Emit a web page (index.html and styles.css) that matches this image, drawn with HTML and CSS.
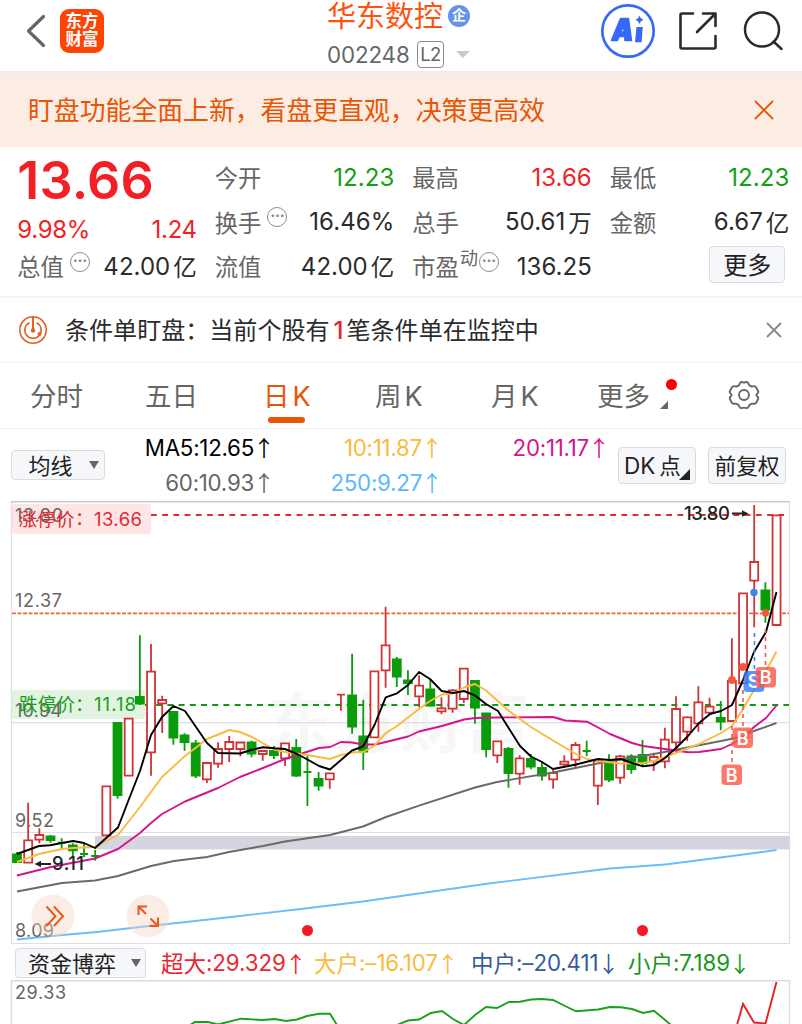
FILE: index.html
```html
<!DOCTYPE html>
<html lang="zh-CN">
<head>
<meta charset="utf-8">
<title>华东数控 002248</title>
<link rel="stylesheet" href="styles.css">
</head>
<body>
<div class="app">
  <header class="topbar">
    <div class="left">
      <svg class="back" width="20" height="34" viewBox="0 0 20 34"><path d="M17.500 2.500 2.500 17 17.500 31.500" fill="none" stroke="#666" stroke-width="3.200" stroke-linecap="round" stroke-linejoin="round"/></svg>
      <div class="logo"><span>东方</span><span>财富</span></div>
    </div>
    <div class="title">
      <div class="name"><span>华东数控</span><span class="corp">企</span></div>
      <div class="code"><span class="num">002248</span><span class="l2">L2</span><i class="caret"></i></div>
    </div>
    <div class="actions">
      <svg class="ai" width="56" height="56" viewBox="0 0 56 56"><circle cx="28" cy="28" r="25.700" fill="none" stroke="#3769f8" stroke-width="2.700"/><path fill="#3769f8" fill-rule="evenodd" stroke="#3769f8" stroke-width="1.500" stroke-linejoin="round" d="M20.500 15.500h8l3 22h-6.500l-.4-4h-5.500l-1.700 4h-6zM23.200 22.500l-2.200 6.500h3.300z"/><path fill="#3769f8" d="M36.500 24h6.300l-1.200 15.200h-6.600zM39.500 12.500q1 3.500 4.300 4.300-3.300 1-4.300 4.300-1-3.300-4.300-4.300 3.300-.8 4.300-4.300z"/></svg>
      <svg width="40" height="40" viewBox="0 0 40 40"><g fill="none" stroke="#2b2b2b" stroke-width="2.600" stroke-linecap="round" stroke-linejoin="round"><path d="M15 2.500H4Q2.500 2.500 2.500 4V36Q2.500 37.500 4 37.500H36Q37.500 37.500 37.500 36V25"/><path d="M25 2.500H37.500V15M37 3 19 21"/></g></svg>
      <svg width="40" height="40" viewBox="0 0 40 40"><g fill="none" stroke="#2b2b2b" stroke-width="2.500" stroke-linecap="round"><circle cx="19" cy="18.500" r="17"/><path d="m30.500 30.500 8 7.500"/></g></svg>
    </div>
  </header>

  <section class="banner">
    <span>盯盘功能全面上新，看盘更直观，决策更高效</span>
    <svg width="20" height="20" viewBox="0 0 20 20"><path d="m1.500 1.500 17 17m0-17-17 17" stroke="#ea5504" stroke-width="1.800" stroke-linecap="round"/></svg>
  </section>

  <section class="quote">
    <div class="col">
      <div class="price up">13.66</div>
      <div class="row pct up"><span>9.98%</span><span>1.24</span></div>
      <div class="row"><label>总值<i class="dots">···</i></label><b>42.00<em>亿</em></b></div>
    </div>
    <div class="col">
      <div class="row"><label>今开</label><b class="down">12.23</b></div>
      <div class="row"><label>换手<i class="dots">···</i></label><b>16.46%</b></div>
      <div class="row"><label>流值</label><b>42.00<em>亿</em></b></div>
    </div>
    <div class="col">
      <div class="row"><label>最高</label><b class="up">13.66</b></div>
      <div class="row"><label>总手</label><b>50.61<em>万</em></b></div>
      <div class="row"><label>市盈<sup>动</sup><i class="dots tight">···</i></label><b>136.25</b></div>
    </div>
    <div class="col">
      <div class="row"><label>最低</label><b class="down">12.23</b></div>
      <div class="row"><label>金额</label><b>6.67<em>亿</em></b></div>
      <div class="row end"><span class="btn more"><span>更多</span></span></div>
    </div>
  </section>

  <section class="alert">
    <svg width="30" height="30" viewBox="0 0 30 30"><g fill="none" stroke="#dd6428" stroke-width="1.600"><circle cx="15" cy="15" r="13.200"/><path d="M11.500 7.700a8.200 8.200 0 1 0 7 0"/><path d="M15 2v13" stroke-width="2"/></g><circle cx="15" cy="15.500" r="2.200" fill="#dd6428"/><circle cx="21.500" cy="19" r="2" fill="#dd6428"/></svg>
    <p>条件单盯盘：当前个股有<strong>1</strong>笔条件单在监控中</p>
    <svg width="16" height="16" viewBox="0 0 16 16"><path d="m1.500 1.500 13 13m0-13-13 13" stroke="#888" stroke-width="1.800" stroke-linecap="round"/></svg>
  </section>

  <nav class="tabs">
    <span>分时</span><span>五日</span><span class="on">日<k>K</k></span><span>周<k>K</k></span><span>月<k>K</k></span>
    <span class="moretab">更多<i class="dot"></i><i class="corner"></i></span>
    <svg width="32" height="30" viewBox="0 0 32 30"><g fill="none" stroke="#666" stroke-width="1.900" stroke-linejoin="round"><path d="M12 3.200Q12.600 1.500 14.300 2.100 16 3 17.700 2.100 19.400 1.500 20.300 3.200C21.300 6 23 7 25.700 6.200Q27.500 5.800 28.300 7.600L30 11Q30.800 12.600 29.300 13.600 27.700 15 29.300 16.600 30.800 17.700 30 19.300L28.300 22.500Q27.400 24.200 25.600 23.700C23 23.200 21.500 24.400 20.400 26.800Q19.500 28.600 17.700 28 16 27.200 14.300 28 12.500 28.600 11.600 26.800C10.500 24.400 9 23.200 6.400 23.700Q4.600 24.200 3.700 22.500L2 19.300Q1.200 17.700 2.700 16.600 4.300 15 2.700 13.600 1.200 12.600 2 11L3.700 7.600Q4.500 5.800 6.300 6.200C9 7 11 6 12 3.200Z"/><circle cx="16" cy="15" r="5"/></g></svg>
  </nav>

  <section class="ma">
    <span class="btn select"><span>均线</span><i class="tri"></i></span>
    <div class="mavals">
      <span class="c5">MA5:12.65<i class="ar">↑</i></span><span class="c10">10:11.87<i class="ar">↑</i></span><span class="c20">20:11.17<i class="ar">↑</i></span>
      <span class="c60">60:10.93<i class="ar">↑</i></span><span class="c250">250:9.27<i class="ar">↑</i></span>
    </div>
    <span class="btn dk"><span><span class="num">DK</span>点</span><i class="fold"></i></span>
    <span class="btn fq"><span>前复权</span></span>
  </section>

  <svg id="kline" class="chart" width="802" height="443" viewBox="0 501 802 443">
    <text class="wm" x="268" y="747" textLength="262">东方财富</text>
    <g fill="none" stroke="#dedee4" stroke-width="1.200"><path d="M11.500 944V502M789.500 502V944M11 943.500H790"/><path d="M12 722.700H789M12 832.500H789"/><path d="M11 501.800H790" stroke="#c9c9cc" stroke-width="1.600"/></g>
    <rect x="95" y="836" width="694.500" height="13.500" fill="#d5d5df"/>
    <rect x="12" y="504" width="139" height="30" rx="3" fill="#fb8080" fill-opacity=".2"/>
    <rect x="12" y="690" width="133" height="29" rx="3" fill="#53b553" fill-opacity=".17"/>
    <path d="M12 613.300H789" stroke="#ec6a35" stroke-width="1.700" stroke-dasharray="4 1.500"/>
    <path d="M151 515H789" stroke="#e22b32" stroke-width="2" stroke-dasharray="5.800 5.400"/>
    <path d="M145 705H789" stroke="#12990f" stroke-width="2" stroke-dasharray="6 5.200"/>
    <g id="candles"></g>
    <g fill="none" stroke-width="1.900" stroke-linejoin="round">
      <polyline stroke="#6bbdf8" points="17,939.500 62,935 97,932 140,927 195,921 240,916 307,908.300 363,901.500 401,896 485,884 610,868.500 665,864.500 732,856 776.500,850"/>
      <polyline stroke="#6a6a6a" points="17,891.500 62,883 95,880.500 118,876 151,866 174,861 190,859 207,857 229,852 263,846 285,841.500 330,835 363,826.500 386,817 419,805.700 475,787.500 497,782 553,772.500 600,763 654,754 721,741 743,736.500 754,731 776.500,723"/>
      <polyline stroke="#d4158a" points="17,875.500 51,867 95,858.500 118,849 140,833 151,823 162,814 185,801.500 218,788 240,777 263,768 285,759 319,748 330,747 341,742 352,742.500 363,744.500 375,744.500 386,742 408,736.500 419,731.500 442,726 464,719.500 475,718 497,717.500 553,717 565,720.500 587,721.700 599,728 610,734 632,743 643,746 665,749 688,752.300 699,752 721,749 732,744 743,738 754,727 766,718 776.500,705.500"/>
      <polyline stroke="#f9bb3d" points="17,862 39,854 62,849 73,848 95,847 118,835 140,807 162,777 185,756 207,739 229.500,730 240,732 252,737 274,749.500 285,752 307,755 330,759 341,755 352,752.500 363,752 374,746 386,733 397,726 419,709 430,701 442,694.500 453,693.500 464,687.500 475,684 486,690.500 509,711 531,727 553,740.500 576,754 587,759 598,761 621,763.500 643,763 654,761 665,757 677,752.500 699,744 721,733 732,726 743,709 754,690 766,671 776.500,651.500"/>
      <polyline stroke="#000" points="17,854 39,846 50,845.300 62,843 73,841 84,843 95,848 118,827.500 129,799 140,771 151,735 162,717 173.500,706 185,711 196,727 207,743 218,753 240,753.500 251,750 263,747.300 274,748.300 285,749 297,754 307.500,759.500 319,766 330,769.500 352,750.500 363,746.500 374.500,725 385.700,697.300 397,693.300 408,685 419,672 430,679 441.700,691 453,693 464,691 475,695.500 486,704 498,711 508,727 520,746 531,756.500 542,762 553,769 576,764.500 598,759 610,760 621,759 632,763 643,766.300 654,765 665,758 677,747 688,736 699,723 710,714 721,711 732,705 743,680 754,652 766,632 776.500,592"/>
    </g>
    <g class="axis"><text x="15" y="521.500" textLength="48">13.80</text><text x="15" y="606.500" textLength="47">12.37</text><text x="15" y="717" textLength="47">10.94</text><text x="15" y="826.500" textLength="39">9.52</text><text x="15" y="937" textLength="39">8.09</text></g>
    <g class="limit"><text x="18.500" y="525.500" fill="#e02a34" textLength="56">涨停价</text><text x="75" y="525" fill="#e02a34">：</text><text x="94" y="525.500" fill="#e02a34" textLength="48">13.66</text>
    <text x="19" y="711" fill="#14a014" textLength="56">跌停价</text><text x="75" y="710.500" fill="#14a014">：</text><text x="94" y="711" fill="#14a014" textLength="42">11.18</text></g>
    <g class="mark"><text x="684" y="520" textLength="46">13.80</text><text x="52" y="870" textLength="32">9.11</text></g>
    <g fill="none" stroke="#222" stroke-width="1.800"><path d="M732 513.500H746M51 864H38"/></g><path d="m748.500 513.500-6.500-3.300v6.600zM34.500 864l6.500-3.300v6.600z" fill="#222"/>
    <g fill="none" stroke-width="1.600" stroke-dasharray="4 4"><path d="M754.500 633V672" stroke="#3c85f2"/><path d="M765.500 629V667M743 690V728M732 726V765" stroke="#ef5a50"/></g>
    <circle cx="754" cy="592.500" r="3.700" fill="#3c85f2"/><circle cx="765.500" cy="613" r="3.700" fill="#f05a3a"/><circle cx="743" cy="667" r="3.900" fill="#fa5540"/><circle cx="732" cy="680" r="3.900" fill="#fa5540"/>
    <g class="tag"><rect x="743.500" y="671" width="21" height="21" rx="4" fill="#2f7eff" fill-opacity=".82"/><text x="753.500" y="688">S</text>
    <rect x="755.500" y="667" width="20.500" height="20.500" rx="4" fill="#fb5545" fill-opacity=".8"/><text x="765.800" y="684">B</text>
    <rect x="732.500" y="727.500" width="20.500" height="20.500" rx="4" fill="#fb5545" fill-opacity=".8"/><text x="742.800" y="744.500">B</text>
    <rect x="721.500" y="764.500" width="20.500" height="20.500" rx="4" fill="#fb5545" fill-opacity=".8"/><text x="731.800" y="781.500">B</text></g>
    <g fill="#f6d5c2" fill-opacity=".42"><circle cx="53" cy="916" r="21.500"/><circle cx="148" cy="916" r="21.500"/></g>
    <g fill="none" stroke="#ea5a14" stroke-width="2"><path d="m46.500 906.500 9 9.800-9 9.700M54 906.500l9 9.800-9 9.700"/><path d="M147 906.500h-8.500v8.500M138.500 906.500l7.500 7.500M149.500 926h8.500v-8.500M158 926l-7.500-7.500"/></g>
    <circle cx="307.500" cy="930.500" r="5.500" fill="#f21b22"/><circle cx="642.500" cy="930.500" r="5.500" fill="#f21b22"/>
  </svg>

  <section class="fund">
    <span class="btn select wide"><span>资金博弈</span><i class="tri"></i></span>
    <span class="f1">超大<n>:29.329</n><i class="ar">↑</i></span><span class="f2">大户<n>:–16.107</n><i class="ar">↑</i></span><span class="f3">中户<n>:–20.411</n><i class="ar">↓</i></span><span class="f4">小户<n>:7.189</n><i class="ar">↓</i></span>
  </section>

  <svg class="chart" width="802" height="44" viewBox="0 980 802 44">
    <path d="M11.500 1024V980.800H789.500V1024" fill="none" stroke="#dcdcde" stroke-width="1.400"/>
    <g class="axis"><text x="15" y="998.500" textLength="51">29.33</text></g>
    <g fill="none" stroke-width="1.900"><polyline stroke="#1ba01b" points="190,1025 195,1022 208,1022 218,1024.500 241,1018.700 262,1020 275,1019 286,1021 297,1019.500 307,1016 319,1013.700 330,1013.700 337,1025"/><polyline stroke="#1ba01b" points="397,1025 408,1020.500 419,1019.500 431,1013 442,1011 453,1019 464,1025 475,1015 486,1007 497,1008 509,1002 520,1001.700 531,999.500 542,999 553,1000 565,1006 576,1011.300 598,1009.500 610,1007 621,1007.300 632,1009 643,1013 654,1010.700 671,1025"/><polyline stroke="#e32228" points="737,1025 743,1004 754,1022.500 765.500,1023.500 776.500,982"/></g>
  </svg>
</div>
<script src="chart.js"></script>
</body>
</html>
```
FILE: styles.css
```css
* { box-sizing: border-box; }
body { margin: 0; background: #fff; color: #2b2b2b; font-family: Inter, "Noto Sans CJK SC", sans-serif; overflow: hidden; }
i, em { font-style: normal; }
.app { width: 802px; height: 1024px; overflow: hidden; display: flex; flex-direction: column; }
.app > * { flex: none; }
.up { color: #f21f25 !important; }
.down { color: #12a012 !important; }

.topbar { height: 73px; border-bottom: 2px solid #ececec; display: grid; grid-template-columns: 300px 1fr 300px; }
.left { display: flex; align-items: center; padding: 0 0 9px 26px; gap: 14px; }
.logo { width: 44px; height: 44px; border-radius: 9px; background: #ff4305; color: #fff; display: flex; flex-direction: column; justify-content: center; align-items: center; font-weight: 700; font-size: 16.500px; line-height: 18px; padding-bottom: 2px; }
.title { padding-left: 27px; }
.name { display: flex; align-items: center; height: 31px; font-size: 29px; color: #ff520f; gap: 5px; white-space: nowrap; }
.name > :first-child { margin-top: -3px; }
.corp { width: 22px; height: 22px; border-radius: 50%; background: #6593ec; color: #fff; font-size: 14px; font-weight: 700; line-height: 20px; text-align: center; }
.code { display: flex; align-items: center; height: 28px; margin-top: 9px; font-size: 22.300px; color: #666; }
.code .num { width: 90px; letter-spacing: -.1px; }
.l2 { width: 27px; height: 27px; border: 1.500px solid #888; border-radius: 4px; font-size: 18.500px; line-height: 24px; text-align: center; letter-spacing: -.5px; }
.caret { margin-left: 12px; border: 7px solid transparent; border-top: 7px solid #c9c9c9; border-bottom: 0; }
.actions { display: flex; align-items: center; justify-content: flex-end; gap: 25px; padding: 0 19px 9px 0; }
.ai { margin-right: -3px; }

.banner { height: 74px; background: #fbede4; display: flex; align-items: center; justify-content: space-between; padding: 0 28px; color: #ea5504; font-size: 25.850px; }
.banner span { margin-top: -3px; }

.quote { height: 151px; padding: 8px 13px 0 18px; display: grid; grid-template-columns: repeat(4, 179.500px); column-gap: 18px; border-bottom: 2px solid #f4f4f4; margin-left: -.7px; }
.row { height: 44.500px; display: flex; justify-content: space-between; align-items: center; white-space: nowrap; }
.row label { color: #666; font-size: 23.300px; display: flex; align-items: center; }
.row b { font-weight: 400; font-size: 24px; letter-spacing: .05px; display: flex; align-items: center; }
.row b em { font-size: 23.500px; margin-left: 3px; letter-spacing: 0; }
.price { height: 51px; font-size: 52px; line-height: 52px; font-weight: 600; letter-spacing: .2px; }
.pct { height: 38px; padding-top: 9px; font-size: 24px; letter-spacing: -.3px; }
.dots { width: 20px; height: 20px; border: 1.700px solid #8d8d8d; border-radius: 50%; color: #888; font-size: 15px; line-height: 16px; text-align: center; margin: -9px 0 0 6px; letter-spacing: -.2px; font-weight: 700; display: flex; justify-content: center; }
.dots.tight { margin-left: 1px; }
sup { font-size: 18px; line-height: 18px; margin: -15px 0 0 1px; }
.btn { background: #f6f7fa; border: 1px solid #d9dbe0; border-radius: 4px; color: #222; display: flex; align-items: center; justify-content: center; white-space: nowrap; }
.btn > span { margin-top: -2px; }
.row.end { justify-content: flex-end; }
.more { width: 76px; height: 37px; margin: -3px 4px 0 0; font-size: 24px; }

.alert { height: 65px; display: flex; align-items: center; padding: 0 20px 0 18px; border-bottom: 1.500px solid #f2f2f2; }
.alert p { margin: -3px auto 0 17px; font-size: 24.050px; white-space: nowrap; }
.alert strong { color: #f21f25; font-weight: 500; margin: 0 3px 0 4px; }

.tabs { height: 66px; display: grid; grid-template-columns: 30px 115px 118px 112px 116px 106px 131px 1fr; align-items: center; border-bottom: 1.500px solid #f2f2f2; color: #666; font-size: 26.500px; }
.tabs > :first-child { grid-column: 2; }
.tabs span { white-space: nowrap; position: relative; margin-top: -3px; }
.tabs svg { margin-top: -1px; }
.tabs k { margin-left: 3px; font-size: 27px; }
.tabs .on { color: #ea5504; }
.tabs .on::after { content: ""; position: absolute; left: 5px; bottom: -9px; width: 37px; height: 6px; border-radius: 3px; background: #ea5504; }
.dot { position: absolute; left: 69px; top: 4px; width: 11px; height: 11px; border-radius: 50%; background: #fb0006; }
.corner { position: absolute; left: 63px; bottom: 5px; border-left: 8px solid transparent; border-bottom: 8px solid #666; }

.ma { height: 72px; display: flex; align-items: center; padding-left: 11px; }
.select { width: 94px; height: 30px; font-size: 22px; gap: 16px; padding-left: 11px; }
.tri { border: 5px solid transparent; border-top: 8px solid #666; border-bottom: 0; }
.mavals { margin: -1px 0 0 23px; width: 477px; display: grid; grid-template-columns: 142px 168px 167px; grid-auto-rows: 35px; font-size: 22.300px; letter-spacing: -.25px; align-items: center; justify-items: end; }
.mavals span { white-space: nowrap; }
.ar { display: inline-block; width: 13px; margin-left: 3px; font-family: "Noto Sans CJK SC"; font-size: 22px; line-height: 24px; text-indent: -4px; letter-spacing: 0; }
.c5 { color: #000; } .c10 { color: #f9bb3d; } .c20 { color: #d4158a; } .c60 { color: #666; } .c250 { color: #5cb8fa; }
.dk { width: 78px; height: 37px; margin-left: 13px; font-size: 21.500px; position: relative; justify-content: flex-start; padding-left: 5px; }
.dk .num { margin-right: 4px; font-size: 22.500px; }
.fold { position: absolute; right: 5px; bottom: 3px; border-left: 11px solid transparent; border-bottom: 11px solid #222; }
.fq { width: 78px; height: 37px; margin-left: 12px; font-size: 21.700px; }

.chart { display: block; }
.axis { font-size: 18px; fill: #666; }
.limit { font-size: 18.500px; }
.mark { font-size: 18.500px; fill: #222; font-weight: 500; }
.tag { font-size: 18px; font-weight: 600; fill: #fff; text-anchor: middle; }
.wm { font-size: 65px; font-weight: 700; fill: #f7f7f8; }
.candle-up { fill: #fff; stroke: #cf3436; stroke-width: 1.800; }
.candle-down { fill: #0a9c0a; stroke: #0a9c0a; stroke-width: 1.800; }

.fund { height: 36px; display: flex; align-items: center; padding: 1px 0 0 15px; font-size: 22.500px; white-space: nowrap; }
.wide { width: 131px; margin-right: 15px; font-size: 22px; padding-left: 8px; gap: 15px; }
.fund n { font-size: 22.300px; letter-spacing: -.1px; }
.fund > span:not(.btn) { display: flex; align-items: center; margin-top: -1px; }
.f1 { width: 153px; color: #e82830; } .f2 { width: 157px; color: #f9bb3d; } .f3 { width: 157px; color: #365b9c; } .f4 { color: #16981b; }
```
FILE: chart.js
```js
// Each candle: direction, high, body top, body bottom, low (chart coordinates)
const candles = [
  ['d',852,854.3,862,862],['u',802.7,840.3,862.7,862.7],['u',828.3,835,839.7,843.3],['d',835,836.3,840,842.7],
  ['d',838.3,842.7,842.7,850],['d',843.3,845.3,850.3,856.7],['d',842.3,854,854,857.3],['d',850,856,856,860.7],
  ['u',786.3,786.3,835.3,835.3],['d',722.3,723,795,798.7],['u',718.7,718.7,775.7,775.7],['d',635.3,697,703.5,705],
  ['u',644,671.7,752.3,775.7],['u',695.7,700,703.3,733],['d',711,712,737.5,744.7],['d',733.3,735.5,742,751],
  ['d',740,743.5,775.5,778],['u',761.7,763,779.3,783],['u',742.3,749,763.7,767.7],['u',736,742,749,762],
  ['u',742.3,742.5,749,756.3],['d',740.7,742.5,753.5,757.3],['u',751,751,754,760.7],['d',746,751,755,759],
  ['u',743.3,743.3,758.3,766],['d',739,748,775.5,777],['d',755,772,772,806],['d',772,779,785.5,790.7],
  ['u',773.3,773.3,779.3,788.7],['u',694.7,694.7,694.7,710.7],['d',653.7,695.5,726.5,733.7],['d',699.7,736.5,751.5,770],
  ['u',671.3,671.3,737.3,737.3],['u',606.7,645.3,670.3,687.7],['d',657,659.5,676.5,687],['d',670.3,680.5,683,695],
  ['u',675.3,685.7,696.3,707.3],['d',680,689.5,705.5,706.7],['u',697.3,708.3,711.3,714.3],['u',689,690.3,708.7,712.7],
  ['u',668.7,668.7,699,703],['d',680.7,681,707.5,723.7],['d',712.7,713.5,749,757.3],['u',741.3,741.3,755.3,763],
  ['d',747,749,773,787.7],['u',755.3,758.3,773.7,784.7],['d',754,759,766.5,769.3],['d',761,768,775.5,780.7],
  ['u',770,773,779.3,788.7],['u',755.3,761.7,764.3,767.7],['u',742,745,759.7,767.7],['d',740.7,751,751,756.3],
  ['u',761,761,785.7,805],['d',754.3,764,779.5,782],['u',755,756.3,777.7,783.7],['d',754.3,756.5,769,773.7],
  ['d',740,755,763,766.7],['u',752.7,757,761.3,771],['u',727.7,739.7,761.3,768.3],['u',696.3,709,742.3,751.7],
  ['u',716.3,717.3,731.7,741],['u',686.3,702.3,723.3,731.7],['u',697.7,706.7,712.7,715],['d',701,718,721.5,730.3],
  ['u',638.3,681,721,721],['u',593.3,593.3,683.3,683.3],['u',505,562,580.7,627.3],['d',582.3,590.5,609.5,622.7],
  ['u',515.3,515.3,625,625]
];
const group = document.getElementById('candles');
candles.forEach(([dir, high, top, bottom, low], i) => {
  const x = 17 + i * 11.17;
  const path = document.createElementNS('http://www.w3.org/2000/svg', 'path');
  path.setAttribute('class', dir === 'u' ? 'candle-up' : 'candle-down');
  path.setAttribute('d', `M${x} ${high}V${top}M${x} ${bottom}V${low}M${x - 4} ${top}h8V${bottom}h-8Z`);
  group.appendChild(path);
});
```
